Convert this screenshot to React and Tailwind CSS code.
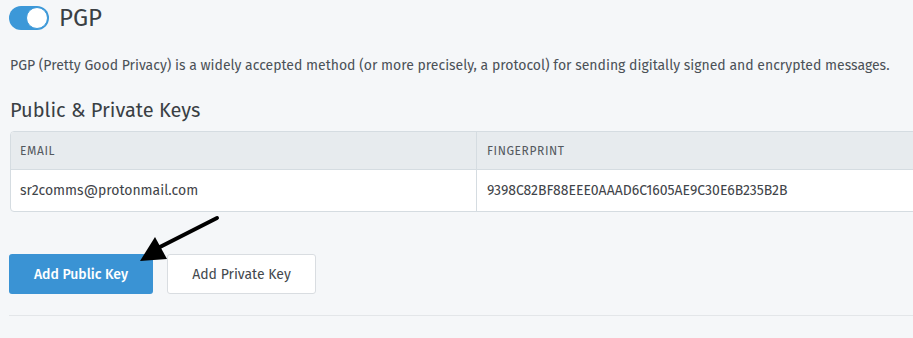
import React from 'react'

const KEYS = [
  { email: 'sr2comms@protonmail.com', fingerprint: '9398C82BF88EEE0AAAD6C1605AE9C30E6B235B2B' }
]

const Toggle = () => (
  <div className="relative h-6 w-10 rounded-full bg-[#3c98d8]">
    <div className="absolute right-[1px] top-[1px] h-[22px] w-[22px] rounded-full border border-[#3c98d8] bg-white" />
  </div>
)

// Pointer drawn over the page, aimed at the public key button
const Arrow = () => (
  <svg className="pointer-events-none absolute left-0 top-0" width="913" height="338">
    <line x1="217" y1="218" x2="156" y2="249" stroke="#000" strokeWidth="4" strokeLinecap="round" />
    <polygon points="140,261 155,237 167,259" fill="#000" />
  </svg>
)

export default function App() {
  return (
    <div className="relative h-[338px] w-[913px] overflow-hidden bg-[#f5f7f9] font-['Fira_Sans','Open_Sans',sans-serif] text-[#4b5157]">
      <div className="flex items-center gap-[10px] pl-[9px] pt-[6px]">
        <Toggle />
        <h1 className="text-[24px] leading-6 text-[#3a3f44]">PGP</h1>
      </div>

      <p className="ml-[10px] mt-[28px] whitespace-nowrap text-[14px] leading-4">
        PGP (Pretty Good Privacy) is a widely accepted method (or more precisely, a protocol) for sending digitally signed and encrypted messages.
      </p>

      <h2 className="ml-[10px] mt-[24px] text-[20px] leading-6 text-[#3a3f44]">Public &amp; Private Keys</h2>

      <div className="ml-[10px] mt-[9px] w-[920px] overflow-hidden rounded-l-[4px] border border-[#d5dce1] bg-white">
        <div className="grid h-[38px] grid-cols-[466px_1fr] border-b border-[#d5dce1] bg-[#e7ebee] text-[12px] uppercase tracking-[0.05em] text-[#54595e]">
          <div className="flex items-center border-r border-[#d5dce1] pl-[9px]">Email</div>
          <div className="flex items-center pl-[10px]">Fingerprint</div>
        </div>
        {KEYS.map(k => (
          <div key={k.fingerprint} className="grid h-[41px] grid-cols-[466px_1fr] text-[14px] text-[#3f4449]">
            <div className="flex items-center border-r border-[#d5dce1] pl-[9px]">{k.email}</div>
            <div className="flex items-center pl-[10px]">{k.fingerprint}</div>
          </div>
        ))}
      </div>

      <div className="ml-[9px] mt-[42px] flex gap-[14px]">
        <button className="h-10 w-[144px] rounded-[3px] bg-[#3a93d4] text-[14px] font-medium text-white">Add Public Key</button>
        <button className="h-10 w-[149px] rounded-[3px] border border-[#d9dde1] bg-white text-[14px] text-[#43484d]">Add Private Key</button>
      </div>

      <div className="ml-[9px] mt-[21px] border-t border-[#e3e6e9]" />

      <Arrow />
    </div>
  )
}
